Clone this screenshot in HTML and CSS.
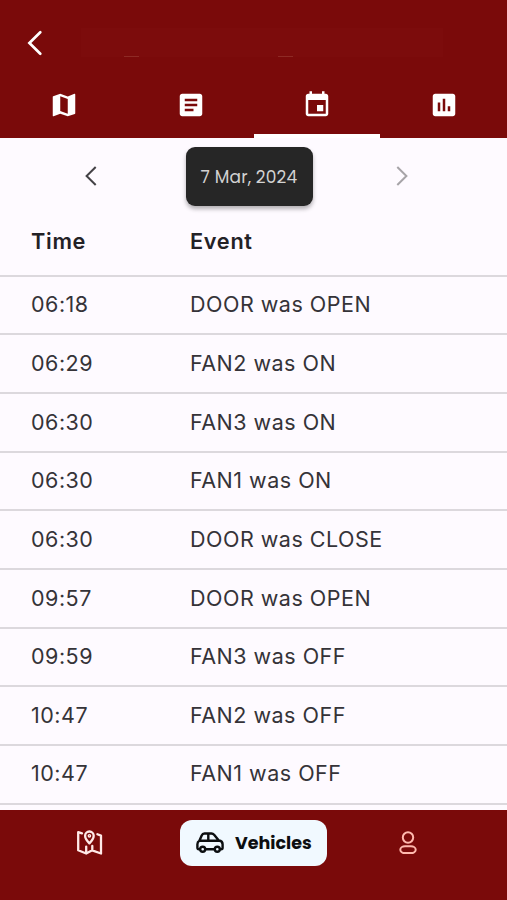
FILE: index.html
```html
<!DOCTYPE html>
<html lang="en">
<head>
<meta charset="utf-8">
<title>Vehicle events</title>
<link rel="stylesheet" href="styles.css">
</head>
<body>
<div class="app">
  <header class="header">
    <div class="appbar">
      <svg class="back" viewBox="0 0 16 26"><path d="M13.3 2.2 2.4 13l10.9 10.8"/></svg>
      <div class="title"><span></span><span></span></div>
    </div>
    <nav class="tabs">
      <div class="tab"><svg viewBox="0 0 24 24"><path d="M20.5 3l-.16.03L15 5.1 9 3 3.36 4.9c-.21.07-.36.25-.36.48V20.5c0 .28.22.5.5.5l.16-.03L9 18.9l6 2.1 5.64-1.9c.21-.07.36-.25.36-.48V3.5c0-.28-.22-.5-.5-.5zM15 19l-6-2.11V5l6 2.11V19z"/></svg></div>
      <div class="tab"><svg viewBox="0 0 24 24"><path d="M19 3H5c-1.1 0-2 .9-2 2v14c0 1.1.9 2 2 2h14c1.1 0 2-.9 2-2V5c0-1.1-.9-2-2-2zm-5 14H7v-2h7v2zm3-4H7v-2h10v2zm0-4H7V7h10v2z"/></svg></div>
      <div class="tab active"><svg viewBox="0 0 24 24"><path d="M17 12h-5v5h5v-5zM16 1v2H8V1H6v2H5c-1.11 0-1.99.9-1.99 2L3 19c0 1.1.89 2 2 2h14c1.1 0 2-.9 2-2V5c0-1.1-.9-2-2-2h-1V1h-2zm3 18H5V8h14v11z"/></svg></div>
      <div class="tab"><svg viewBox="0 0 24 24"><path d="M19 3H5c-1.1 0-2 .9-2 2v14c0 1.1.9 2 2 2h14c1.1 0 2-.9 2-2V5c0-1.1-.9-2-2-2zM9 17H7v-7h2v7zm4 0h-2V7h2v10zm4 0h-2v-4h2v4z"/></svg></div>
    </nav>
  </header>
  <main class="content">
    <div class="datebar">
      <svg class="arrow" viewBox="0 0 14 22"><path d="M11.7 2 2.6 11l9.1 9"/></svg>
      <div class="date"><span>7 Mar, 2024</span></div>
      <svg class="arrow next" viewBox="0 0 14 22"><path d="M2.3 2l9.1 9-9.1 9"/></svg>
    </div>
    <div class="table">
      <div class="row head"><span>Time</span><span>Event</span></div>
      <div class="row"><span>06:18</span><span>DOOR was OPEN</span></div>
      <div class="row"><span>06:29</span><span>FAN2 was ON</span></div>
      <div class="row"><span>06:30</span><span>FAN3 was ON</span></div>
      <div class="row"><span>06:30</span><span>FAN1 was ON</span></div>
      <div class="row"><span>06:30</span><span>DOOR was CLOSE</span></div>
      <div class="row"><span>09:57</span><span>DOOR was OPEN</span></div>
      <div class="row"><span>09:59</span><span>FAN3 was OFF</span></div>
      <div class="row"><span>10:47</span><span>FAN2 was OFF</span></div>
      <div class="row"><span>10:47</span><span>FAN1 was OFF</span></div>
    </div>
  </main>
  <footer class="bottom">
    <div class="item">
      <svg class="mapicon" viewBox="0 0 28 26"><path d="M6 3.400 2.200 2.200v18.100l8 3.200 6-3.200 8.800 3.200V5.600l-3.600-1.400M10.200 16.600v6M16.300 16v4"/><path d="M13.400 13.400C10.500 10.400 9.100 8.300 9.100 5.800a4.300 4.300 0 0 1 8.600 0c0 2.500-1.400 4.600-4.300 7.600z"/><circle cx="13.400" cy="5.800" r=".7"/></svg>
    </div>
    <div class="item pill">
      <svg class="car" viewBox="0 0 28 22"><path d="M4.200 17.200H2.800Q1.400 17.200 1.400 15.800V12.300Q1.400 9.700 3.400 8.700L5.700 3.400Q6.500 1.500 8.500 1.500H15.500Q17 1.500 18.100 2.700L22.800 8.500Q26.600 9 26.600 12.200V15.800Q26.600 17.200 25.200 17.200H24M9.200 17.200H18.600M3.400 8.700H22.800M12.300 1.500V8.700"/><circle cx="6.700" cy="17.200" r="2.500"/><circle cx="21.300" cy="17.200" r="2.500"/></svg>
      <span>Vehicles</span>
    </div>
    <div class="item">
      <svg class="user" viewBox="0 0 18 24"><circle cx="9" cy="6.500" r="5.200"/><rect x="1.300" y="15.300" width="15.400" height="6.800" rx="4.800" ry="3.400"/></svg>
    </div>
  </footer>
</div>
</body>
</html>
```
FILE: styles.css
```css
* { box-sizing: border-box; }
body { margin: 0; background: #fefaff; color: #353338; font-family: Inter, "Liberation Sans", sans-serif; }
.app { width: 507px; height: 900px; display: flex; flex-direction: column; overflow: hidden; }
svg { display: block; flex: none; }

.header { height: 138px; background: #7a0a0a; display: flex; flex-direction: column; }
.appbar { height: 73px; padding: 12px 0 0 27px; display: flex; align-items: center; }
.back { width: 16px; height: 26px; fill: none; stroke: #fff; stroke-width: 2.7; stroke-linecap: round; }
.title { width: 362px; height: 29px; margin-left: 38px; padding: 0 150px 0 43px; background: #7c0c0c; display: flex; align-items: flex-end; justify-content: space-between; }
.title span { width: 15px; height: 1px; background: #8e2a25; }
.tabs { flex: 1; display: grid; grid-template-columns: repeat(4, 1fr); }
.tab { display: flex; justify-content: center; padding: 17.300px 0 0 1px; border-bottom: 4px solid transparent; }
.tab.active { border-bottom-color: #fff; }
.tab svg { width: 30px; height: 30px; fill: #fff; }

.content { height: 672px; overflow: hidden; }
.datebar { height: 80px; padding: 9.400px 98px 0 84px; display: flex; align-items: flex-start; justify-content: space-between; }
.arrow { width: 14px; height: 22px; margin-top: 18px; fill: none; stroke: #444246; stroke-width: 2; }
.next { stroke: #a7a4a8; }
.date { width: 127px; height: 59px; margin-left: 5px; border-radius: 9px; background: #262626; color: #d2d2d2; display: flex; align-items: center; justify-content: center; font: 400 17px Poppins, Lato, sans-serif; letter-spacing: .15px; box-shadow: 0 3px 4px rgba(0,0,0,.3); }
.row { height: 58.67px; padding: 0 31px 1.500px; display: grid; grid-template-columns: 159px 1fr; align-items: center; border-bottom: 2px solid #dcd8dd; font-size: 21.500px; letter-spacing: .5px; }
.head { color: #232126; font-weight: 600; font-size: 21.700px; letter-spacing: .7px; padding-bottom: 10.500px; }

.bottom { height: 90px; padding-top: 9.500px; background: #7a0a0a; display: grid; grid-template-columns: 180.400px 147px 162px; align-items: start; }
.item { height: 46px; display: flex; align-items: center; justify-content: center; }
.mapicon { width: 28px; height: 26px; fill: none; stroke: #ffe9e7; stroke-width: 2.300; stroke-linejoin: round; stroke-linecap: round; }
.pill { border-radius: 12px; background: #f1f9ff; color: #0c0e10; gap: 11px; font: 700 17.500px Poppins, Inter, sans-serif; }
.car { width: 28px; height: 22px; fill: none; stroke: #0c0e10; stroke-width: 2.400; stroke-linejoin: round; }
.user { width: 18px; height: 24px; fill: none; stroke: #ffb9ae; stroke-width: 2; }
```
